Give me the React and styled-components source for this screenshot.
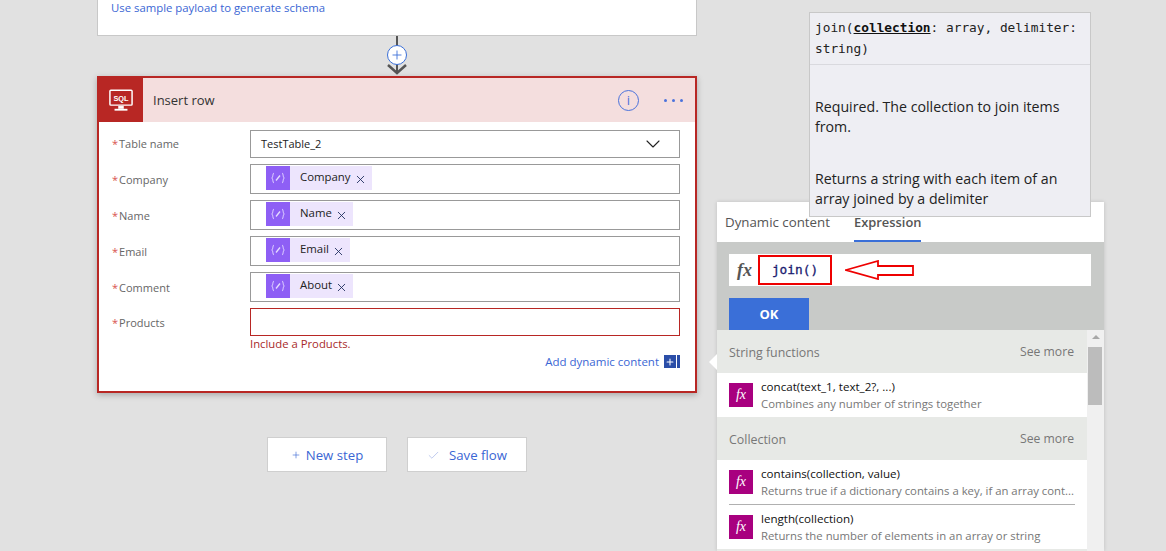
import React from 'react';
import styled, { createGlobalStyle } from 'styled-components';
import { Plus, X, ChevronDown, Check } from 'lucide-react';

const GlobalStyle = createGlobalStyle`
  html, body { margin: 0; padding: 0; }
  body {
    width: 1166px;
    height: 551px;
    overflow: hidden;
    background: #e1e1e1;
    font-family: "Open Sans", "Noto Sans", sans-serif;
  }
  * { box-sizing: border-box; }
`;

const Page = styled.div`
  position: relative;
  display: flex;
  gap: 20px;
  width: 1166px;
  height: 551px;
  padding-left: 97px;
  overflow: hidden;
`;

const Canvas = styled.div`
  width: 600px;
  display: flex;
  flex-direction: column;
`;

const TopCard = styled.div`
  height: 36px;
  background: #fff;
  border: 1px solid #c8c8c8;
  border-top: 0;
  padding: 0 13px;
  line-height: 12px;
`;

const BlueLink = styled.a`
  font-size: 11.35px;
  color: #3a66d4;
`;

const Connector = styled.div`
  position: relative;
  height: 40px;
  display: flex;
  justify-content: center;
`;

const Line = styled.div`
  width: 2px;
  height: 38px;
  background: #555;
`;

const PlusCircle = styled.div`
  position: absolute;
  top: 9px;
  left: 290px;
  width: 20px;
  height: 20px;
  border-radius: 50%;
  border: 1px solid #3a6fd8;
  background: #fff;
  color: #3a6fd8;
  display: flex;
  align-items: center;
  justify-content: center;
`;

const ArrowHead = styled.svg`
  position: absolute;
  top: 27px;
  left: 289px;
`;

const Card = styled.div`
  height: 317px;
  background: #fff;
  border: 2px solid #b82724;
  box-shadow: 0 2px 6px rgba(0, 0, 0, 0.25);
  display: flex;
  flex-direction: column;
`;

const CardHeader = styled.div`
  height: 44px;
  flex: none;
  background: #f4dede;
  display: flex;
  align-items: center;
`;

const IconBlock = styled.div`
  width: 44px;
  height: 44px;
  background: #b82724;
  display: flex;
  align-items: center;
  justify-content: center;
`;

const CardTitle = styled.div`
  flex: 1;
  margin-left: 10px;
  font-size: 13px;
  color: #333;
`;

const InfoIcon = styled.div`
  width: 21px;
  height: 21px;
  margin-right: 25px;
  border: 1px solid #4a72dc;
  border-radius: 50%;
  color: #4a72dc;
  font-size: 13px;
  line-height: 18px;
  text-align: center;
`;

const Dots = styled.div`
  display: flex;
  gap: 5px;
  margin-right: 12px;
`;

const Dot = styled.span`
  width: 3px;
  height: 3px;
  border-radius: 50%;
  background: #4a72dc;
`;

const Form = styled.div`
  padding: 8px 15px 0 13px;
  display: flex;
  flex-direction: column;
  gap: 6px;
`;

const Row = styled.div`
  display: flex;
  align-items: center;
`;

const Label = styled.div`
  width: 138px;
  flex: none;
  font-size: 11px;
  color: #666;
  margin-top: ${p => p.$up || 0}px;
`;

const Star = styled.span`
  color: #d9534f;
  margin-right: 1px;
`;

const Field = styled.div`
  flex: 1;
  height: ${p => (p.$tall ? 30 : 28)}px;
  border: 1px solid ${p => (p.$error ? '#b82724' : '#999')};
  display: flex;
  align-items: center;
  justify-content: space-between;
  padding: ${p => (p.$tall ? '0 0 0 15px' : '0 14px 0 10px')};
  font-size: 11px;
  color: #222;
`;

const FieldValue = styled.span`
  margin-top: -2px;
`;

const Token = styled.div`
  height: 24px;
  display: flex;
  align-items: center;
  background: #ede5fd;
  font-size: 11.4px;
  color: #222;
  margin-top: -2px;
  padding-right: 5px;
`;

const TokenIcon = styled.div`
  width: 24px;
  height: 24px;
  background: #8e5ff5;
  display: flex;
  align-items: center;
  justify-content: center;
  margin-right: 10px;
`;

const TokenLabel = styled.span`
  margin-top: -3px;
`;

const TokenX = styled.span`
  display: flex;
  margin: 3px 0 0 3px;
  color: #1a2a5a;
`;

const ErrorText = styled.div`
  margin: 0 0 0 138px;
  font-size: 11.3px;
  color: #a82a2a;
`;

const AddDynamic = styled.div`
  display: flex;
  justify-content: flex-end;
  align-items: center;
  margin-top: 3px;
  color: #3a66d4;
  font-size: 11.5px;
`;

const AddBox = styled.span`
  display: flex;
  align-items: center;
  justify-content: center;
  width: 12px;
  height: 13px;
  margin-left: 5px;
  background: #2b4ea8;
  color: #fff;
`;

const AddBar = styled.span`
  width: 3px;
  height: 13px;
  margin-left: 1px;
  background: #2b4ea8;
`;

const StepRow = styled.div`
  display: flex;
  justify-content: center;
  gap: 20px;
  margin-top: 44px;
`;

const StepButton = styled.div`
  width: 120px;
  height: 35px;
  padding-top: 1px;
  background: #fff;
  border: 1px solid #cfcfcf;
  display: flex;
  align-items: center;
  justify-content: center;
  gap: ${p => p.$gap}px;
  font-size: 13.2px;
  color: #3a66d4;
`;

const Panel = styled.div`
  position: relative;
  width: 387px;
  margin-top: 202px;
  height: 349px;
  background: #fff;
  box-shadow: 0 0 4px rgba(0, 0, 0, 0.15);
  display: flex;
  flex-direction: column;
`;

const Pointer = styled.div`
  position: absolute;
  top: 152px;
  left: -8px;
  width: 0;
  height: 0;
  border-top: 8px solid transparent;
  border-bottom: 8px solid transparent;
  border-right: 8px solid #fff;
`;

const Tabs = styled.div`
  height: 40px;
  flex: none;
  display: flex;
  gap: 24px;
  padding-left: 8px;
  font-size: 13.3px;
  color: #555;
`;

const Tab = styled.div`
  height: 40px;
  line-height: 40px;
  border-bottom: ${p => (p.$active ? '2px solid #3a6fd8' : '0')};
  font-weight: ${p => (p.$active ? 600 : 400)};
  font-size: ${p => (p.$active ? '12.9px' : '13.3px')};
`;

const FormulaArea = styled.div`
  height: 88px;
  flex: none;
  background: #c8cac8;
  padding: 12px 13px 0 12px;
`;

const FormulaInput = styled.div`
  height: 32px;
  background: #fff;
  display: flex;
  align-items: center;
`;

const FxBig = styled.div`
  width: 23px;
  text-align: right;
  font-family: "Liberation Serif", serif;
  font-style: italic;
  font-weight: 700;
  font-size: 18px;
  color: #555;
`;

const Highlight = styled.div`
  width: 74px;
  height: 30px;
  margin-left: 6px;
  border: 2px solid #ee0000;
  text-align: center;
  line-height: 26px;
  font-family: "DejaVu Sans Mono", monospace;
  font-size: 12.8px;
  color: #1a1a70;
  -webkit-text-stroke: 0.3px #1a1a70;
`;

const RedArrow = styled.svg`
  margin-left: 13px;
`;

const OkButton = styled.div`
  width: 80px;
  height: 32px;
  margin-top: 12px;
  background: #3a6fd8;
  color: #fff;
  font-weight: 700;
  font-size: 13px;
  text-align: center;
  line-height: 32px;
`;

const ListArea = styled.div`
  position: relative;
  flex: 1;
  min-height: 0;
  overflow: hidden;
`;

const Scrollbar = styled.div`
  position: absolute;
  top: 0;
  right: 0;
  bottom: 0;
  width: 17px;
  background: #f0f0f0;
`;

const ScrollUp = styled.div`
  margin: 5px auto 0;
  width: 0;
  height: 0;
  border-left: 4px solid transparent;
  border-right: 4px solid transparent;
  border-bottom: 4px solid #a8a8a8;
`;

const ScrollThumb = styled.div`
  width: 14px;
  height: 58px;
  margin: 8px 0 0 1px;
  background: #bcbcbc;
`;

const List = styled.div`
  width: 370px;
`;

const GroupHeader = styled.div`
  height: 43px;
  padding: 2px 13px 0 12px;
  background: #e7e9e6;
  display: flex;
  align-items: center;
  justify-content: space-between;
  font-size: 12.4px;
  color: #777;
`;

const SeeMore = styled.span`
  font-size: 12.2px;
  margin-top: -2px;
`;

const Item = styled.div`
  height: ${p => p.$h || 44}px;
  display: flex;
  align-items: center;
  margin: 0 12px;
  border-bottom: ${p => (p.$rule ? '1px solid #b0b0b0' : '0')};
`;

const FxBox = styled.div`
  width: 24px;
  height: 24px;
  flex: none;
  background: #a8007f;
  color: #fff;
  font-family: "Liberation Serif", serif;
  font-style: italic;
  font-size: 14px;
  text-align: center;
  line-height: 23px;
`;

const ItemText = styled.div`
  margin-left: 8px;
  min-width: 0;
  line-height: 16px;
`;

const ItemTitle = styled.div`
  font-size: 11.6px;
  color: #111;
  white-space: nowrap;
`;

const ItemDesc = styled.div`
  font-size: 11.35px;
  color: #777;
  white-space: nowrap;
  margin-top: 1px;
`;

const Tooltip = styled.div`
  position: absolute;
  top: 12px;
  left: 809px;
  width: 282px;
  height: 205px;
  background: #eeeef3;
  border: 1px solid #c8c8c8;
`;

const Signature = styled.div`
  height: 52px;
  padding: 4px 5px 0;
  border-bottom: 1px solid #d9d9de;
  font-family: "DejaVu Sans Mono", monospace;
  font-size: 12.8px;
  line-height: 21px;
  color: #222;
`;

const Param = styled.span`
  font-weight: 700;
  text-decoration: underline;
  color: #111;
`;

const TipText = styled.div`
  padding: 0 5px;
  margin-top: ${p => p.$top}px;
  font-size: 14.2px;
  line-height: 20px;
  color: #222;
`;

function SqlIcon() {
  return (
    <svg width="24" height="23" viewBox="0 0 26 24">
      <rect x="1" y="1" width="24" height="16" rx="1" fill="none" stroke="#fff" strokeWidth="1.6" />
      <text x="13" y="12.5" fontSize="8" fontWeight="700" fill="#fff" textAnchor="middle" fontFamily="Liberation Sans, sans-serif">SQL</text>
      <rect x="10" y="18" width="6" height="3" fill="#fff" />
      <rect x="6" y="21" width="14" height="2" fill="#fff" />
    </svg>
  );
}

function BraceIcon() {
  return (
    <svg width="14" height="12" viewBox="0 0 14 12" fill="none" stroke="#e6dcff" strokeWidth="0.9">
      <path d="M3 1C1.5 1 2.3 5.2 .8 6C2.3 6.8 1.5 11 3 11" />
      <path d="M11 1C12.5 1 11.7 5.2 13.2 6C11.7 6.8 12.5 11 11 11" />
      <path d="M5 8.5L9 3.5" strokeWidth="1.3" />
    </svg>
  );
}

const tokens = [
  ['Company', 'Company'],
  ['Name', 'Name'],
  ['Email', 'Email'],
  ['Comment', 'About'],
];

export default function App() {
  return (
    <Page>
      <GlobalStyle />
      <Canvas>
        <TopCard>
          <BlueLink>Use sample payload to generate schema</BlueLink>
        </TopCard>
        <Connector>
          <Line />
          <PlusCircle><Plus size={14} strokeWidth={1.5} /></PlusCircle>
          <ArrowHead width="22" height="13" viewBox="0 0 22 13" fill="none" stroke="#555" strokeWidth="2.5">
            <path d="M2 2L11 10L20 2" />
          </ArrowHead>
        </Connector>
        <Card>
          <CardHeader>
            <IconBlock><SqlIcon /></IconBlock>
            <CardTitle>Insert row</CardTitle>
            <InfoIcon>i</InfoIcon>
            <Dots><Dot /><Dot /><Dot /></Dots>
          </CardHeader>
          <Form>
            <Row>
              <Label $up={-2}><Star>*</Star>Table name</Label>
              <Field>
                <FieldValue>TestTable_2</FieldValue>
                <ChevronDown size={24} strokeWidth={1.1} />
              </Field>
            </Row>
            {tokens.map(([label, value]) => (
              <Row key={label}>
                <Label><Star>*</Star>{label}</Label>
                <Field $tall>
                  <Token>
                    <TokenIcon><BraceIcon /></TokenIcon>
                    <TokenLabel>{value}</TokenLabel>
                    <TokenX><X size={13} strokeWidth={1.6} /></TokenX>
                  </Token>
                </Field>
              </Row>
            ))}
            <div>
              <Row>
                <Label><Star>*</Star>Products</Label>
                <Field $error />
              </Row>
              <ErrorText>Include a Products.</ErrorText>
              <AddDynamic>
                Add dynamic content
                <AddBox><Plus size={10} strokeWidth={2.5} /></AddBox>
                <AddBar />
              </AddDynamic>
            </div>
          </Form>
        </Card>
        <StepRow>
          <StepButton $gap={5}><Plus size={10} strokeWidth={1.5} />New step</StepButton>
          <StepButton $gap={9}>
            <Check size={13} strokeWidth={1} color="#8a9fe0" />Save flow
          </StepButton>
        </StepRow>
      </Canvas>

      <Panel>
        <Pointer />
        <Tabs>
          <Tab>Dynamic content</Tab>
          <Tab $active>Expression</Tab>
        </Tabs>
        <FormulaArea>
          <FormulaInput>
            <FxBig>fx</FxBig>
            <Highlight>join()</Highlight>
            <RedArrow width="70" height="20" viewBox="0 0 70 20" fill="#fff" stroke="#ee0000" strokeWidth="1.8">
              <path d="M1 10L33 1V6H68V15H33V19Z" />
            </RedArrow>
          </FormulaInput>
          <OkButton>OK</OkButton>
        </FormulaArea>
        <ListArea>
          <List>
            <GroupHeader>String functions<SeeMore>See more</SeeMore></GroupHeader>
            <Item>
              <FxBox>fx</FxBox>
              <ItemText>
                <ItemTitle>concat(text_1, text_2?, ...)</ItemTitle>
                <ItemDesc>Combines any number of strings together</ItemDesc>
              </ItemText>
            </Item>
            <GroupHeader>Collection<SeeMore>See more</SeeMore></GroupHeader>
            <Item $rule $h={45}>
              <FxBox>fx</FxBox>
              <ItemText>
                <ItemTitle>contains(collection, value)</ItemTitle>
                <ItemDesc>Returns true if a dictionary contains a key, if an array cont...</ItemDesc>
              </ItemText>
            </Item>
            <Item $h={44}>
              <FxBox>fx</FxBox>
              <ItemText>
                <ItemTitle>length(collection)</ItemTitle>
                <ItemDesc>Returns the number of elements in an array or string</ItemDesc>
              </ItemText>
            </Item>
            <GroupHeader />
          </List>
          <Scrollbar>
            <ScrollUp />
            <ScrollThumb />
          </Scrollbar>
        </ListArea>
      </Panel>

      <Tooltip>
        <Signature>join(<Param>collection</Param>: array, delimiter: string)</Signature>
        <TipText $top={32}>Required. The collection to join items from.</TipText>
        <TipText $top={32}>Returns a string with each item of an array joined by a delimiter</TipText>
      </Tooltip>
    </Page>
  );
}
